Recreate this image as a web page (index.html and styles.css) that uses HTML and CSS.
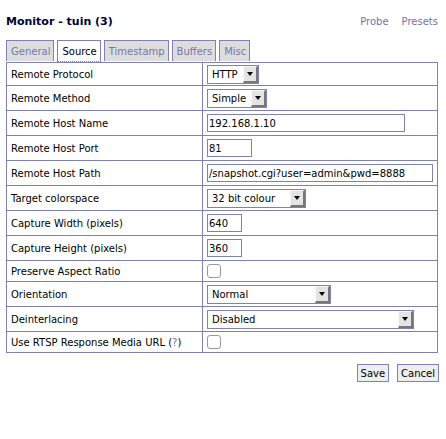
FILE: index.html
```html
<!DOCTYPE html>
<html lang="en">
<head>
  <meta charset="UTF-8">
  <title>Monitor - tuin (3)</title>
  <link rel="stylesheet" href="styles.css">
</head>
<body>
  <div class="header">
    <h2>Monitor - tuin (3)</h2>
    <div class="links">
      <a href="#">Probe</a>
      <a href="#">Presets</a>
    </div>
  </div>

  <ul class="tabs">
    <li><a href="#">General</a></li>
    <li class="active"><a href="#">Source</a></li>
    <li><a href="#">Timestamp</a></li>
    <li><a href="#">Buffers</a></li>
    <li><a href="#">Misc</a></li>
  </ul>

  <form>
    <table class="settings">
      <tr class="first">
        <td class="label">Remote Protocol</td>
        <td><span class="sel"><select class="w52"><option>HTTP</option></select><span class="arrow"></span></span></td>
      </tr>
      <tr class="tall">
        <td class="label">Remote Method</td>
        <td><span class="sel"><select class="w60"><option>Simple</option></select><span class="arrow"></span></span></td>
      </tr>
      <tr class="tall">
        <td class="label">Remote Host Name</td>
        <td><input type="text" class="w198" value="192.168.1.10"></td>
      </tr>
      <tr class="tall">
        <td class="label">Remote Host Port</td>
        <td><input type="text" class="w45" value="81"></td>
      </tr>
      <tr class="tall">
        <td class="label">Remote Host Path</td>
        <td><input type="text" class="w226" value="/snapshot.cgi?user=admin&amp;pwd=8888"></td>
      </tr>
      <tr class="tall">
        <td class="label">Target colorspace</td>
        <td><span class="sel"><select class="w99"><option>32 bit colour</option></select><span class="arrow"></span></span></td>
      </tr>
      <tr class="tall">
        <td class="label">Capture Width (pixels)</td>
        <td><input type="text" class="w35" value="640"></td>
      </tr>
      <tr class="tall">
        <td class="label">Capture Height (pixels)</td>
        <td><input type="text" class="w35" value="360"></td>
      </tr>
      <tr>
        <td class="label">Preserve Aspect Ratio</td>
        <td><span class="check"></span></td>
      </tr>
      <tr class="tall">
        <td class="label">Orientation</td>
        <td><span class="sel"><select class="w124"><option>Normal</option></select><span class="arrow"></span></span></td>
      </tr>
      <tr class="tall">
        <td class="label">Deinterlacing</td>
        <td><span class="sel"><select class="w207"><option>Disabled</option></select><span class="arrow"></span></span></td>
      </tr>
      <tr>
        <td class="label">Use RTSP Response Media URL (<a href="#" class="help">?</a>)</td>
        <td><span class="check"></span></td>
      </tr>
    </table>

    <div class="buttons">
      <button type="button">Save</button>
      <button type="button">Cancel</button>
    </div>
  </form>
</body>
</html>
```

FILE: styles.css
```css
body {
  font-family: "DejaVu Sans", Verdana, sans-serif;
  font-size: 10px;
  margin: 0;
  padding: 0 6px;
  background: #fff;
  color: #000;
}
a {
  color: #7a70aa;
  text-decoration: none;
}
.header {
  display: flex;
  justify-content: space-between;
  align-items: center;
  padding-top: 13px;
  height: 16px;
}
.header h2 {
  margin: 0;
  font-size: 11px;
  color: #000033;
}
.links {
  display: flex;
  gap: 13px;
  padding-right: 2px;
}
.tabs {
  list-style: none;
  margin: 11px 0 0 0;
  padding: 0;
  display: flex;
  gap: 3px;
}
.tabs li {
  background: #dddddd;
  border: 1px solid #8080b8;
  border-bottom: none;
  height: 21px;
  box-sizing: border-box;
  padding: 0 3px 0 4px;
  line-height: 21px;
}
.tabs li a {
  color: #7777aa;
}
.tabs li.active {
  background: #fff;
  height: 22px;
  border-bottom: 1px dotted #8080b8;
  margin-bottom: -1px;
  position: relative;
}
.tabs li.active a {
  color: #000;
}
.settings {
  border-collapse: collapse;
  width: 432px;
  margin-top: 1px;
}
.settings td {
  border: 1px solid #8080b8;
  padding: 0 4px;
  height: 20px;
}
.settings tr.tall td {
  height: 24px;
}
.settings tr.first td {
  height: 22px;
}
.settings td.label {
  width: 188px;
  color: #000;
}
.help {
  color: #7a70aa;
}
input[type=text] {
  font-family: "DejaVu Sans", Verdana, sans-serif;
  font-size: 10px;
  border: 1px solid #8080b8;
  height: 18px;
  box-sizing: border-box;
  padding: 0 1px;
  margin: 0;
  color: #000;
}
.sel {
  position: relative;
  display: inline-block;
  vertical-align: middle;
}
.sel select {
  appearance: none;
  font-family: "DejaVu Sans", Verdana, sans-serif;
  font-size: 10px;
  border: 1px solid #8080b8;
  height: 19px;
  padding: 0 4px;
  margin: 0;
  background: #fff;
  color: #000;
  display: block;
}
.sel .arrow {
  position: absolute;
  right: 1px;
  top: 1px;
  width: 15px;
  height: 17px;
  box-sizing: border-box;
  background: #e4e4e4;
  border-right: 2px solid #777;
  border-bottom: 2px solid #777;
  border-top: 1px solid #f8f8f8;
  border-left: 1px solid #f8f8f8;
  pointer-events: none;
}
.sel .arrow::after {
  content: "";
  position: absolute;
  left: 3px;
  top: 5px;
  border-left: 3px solid transparent;
  border-right: 3px solid transparent;
  border-top: 4px solid #000;
}
.w52 { width: 52px; }
.w60 { width: 60px; }
.w99 { width: 99px; }
.w124 { width: 124px; }
.w207 { width: 207px; }
.w198 { width: 198px; }
.w45 { width: 45px; }
.w226 { width: 226px; }
.w35 { width: 35px; }
.check {
  display: inline-block;
  width: 12px;
  height: 12px;
  border: 1px solid #999;
  border-radius: 3px;
  vertical-align: middle;
  background: #fff;
}
.buttons {
  display: flex;
  justify-content: flex-end;
  gap: 8px;
  margin-top: 11px;
  padding-right: 1px;
}
.buttons button {
  font-family: "DejaVu Sans", Verdana, sans-serif;
  font-size: 10px;
  background: #eeeeee;
  border: 1px solid #8080b8;
  padding: 0 3px;
  height: 18px;
  margin: 0;
  color: #000;
}
```
